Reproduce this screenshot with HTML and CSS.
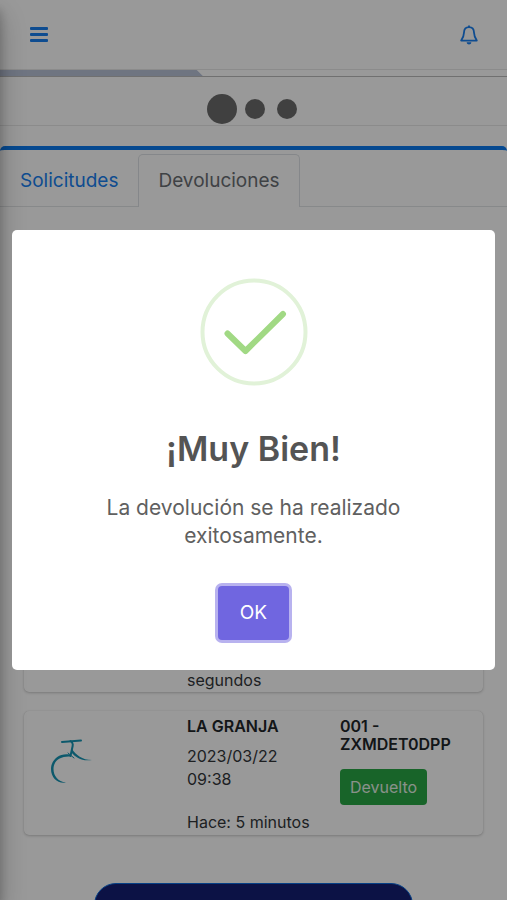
FILE: index.html
```html
<!DOCTYPE html>
<html lang="es">
<head>
<meta charset="utf-8">
<meta name="viewport" content="width=device-width, initial-scale=1">
<title>Devoluciones</title>
<link rel="stylesheet" href="styles.css">
</head>
<body>
<div class="page">
  <header class="navbar">
    <button class="icon-button" type="button" aria-label="Menú">
      <svg width="18" height="16" viewBox="0 0 18 16" fill="currentColor"><rect width="18" height="3" rx="1"/><rect y="6" width="18" height="3" rx="1"/><rect y="12" width="18" height="3" rx="1"/></svg>
    </button>
    <button class="icon-button" type="button" aria-label="Notificaciones">
      <svg width="18" height="20" viewBox="0 0 18 20" fill="none" stroke="currentColor" stroke-width="1.800" stroke-linejoin="round"><path d="M9 .5v2"/><path d="M9 2.200C5.800 2.200 4.100 4.600 4 7.500C3.900 11.400 3 13 1.200 15.600H16.800C15 13 14.100 11.400 14 7.500C13.900 4.600 12.200 2.200 9 2.200Z"/><path d="M6.600 17.300h4.800c-.3 1.600-1.200 2.200-2.400 2.200s-2.100-.6-2.400-2.200z" fill="currentColor" stroke="none"/></svg>
    </button>
  </header>
  <div class="progress"><div class="progress-bar"></div></div>
  <div class="steps"><span class="dot dot-current"></span><span class="dot"></span><span class="dot"></span></div>
  <main class="panel">
    <nav class="tabs">
      <a class="tab" href="#solicitudes">Solicitudes</a>
      <a class="tab tab-active" href="#devoluciones">Devoluciones</a>
    </nav>
    <div class="list">
      <article class="item item-tall">
        <p class="ago">segundos</p>
      </article>
      <article class="item">
        <svg class="bike" width="44" height="48" viewBox="0 0 44 48" fill="none" stroke="currentColor" stroke-linecap="round">
          <path d="M12 4L31 2.500" stroke-width="2"/>
          <path d="M20.500 3C23.500 5 23 7 22 11L20.500 18" stroke-width="2"/>
          <path d="M22 11C26 17 32 22 42 22C32 23.500 26 20 21 14Z" fill="currentColor" stroke="none"/>
          <path d="M18 15L24 20" stroke-width="1"/>
          <path d="M20 16.500C9 14.500 1 22 1 31C1 40 8 46 16 44.500C8 43.500 3.500 38 3.500 31C3.500 23 10 18 20 18.500Z" fill="currentColor" stroke="none"/>
        </svg>
        <div class="info">
          <h2 class="item-title">LA GRANJA</h2>
          <p class="date">2023/03/22 09:38</p>
          <p class="ago">Hace: 5 minutos</p>
        </div>
        <div class="status">
          <h2 class="item-title">001 - ZXMDET0DPP</h2>
          <button class="badge" type="button">Devuelto</button>
        </div>
      </article>
    </div>
    <button class="primary" type="button" aria-label="Nueva devolución"></button>
  </main>
</div>
<aside class="sidebar" aria-hidden="true"></aside>
<div class="overlay">
  <section class="dialog" role="dialog" aria-modal="true" aria-labelledby="dialog-title">
    <svg class="check" width="108" height="108" viewBox="0 0 108 108" fill="none">
      <circle cx="54" cy="54" r="51.500" stroke="#e1f2d8" stroke-width="4"/>
      <path d="M27.500 55.500L45.500 73L83 36" stroke="#a1d984" stroke-width="6" stroke-linecap="round" stroke-linejoin="round"/>
    </svg>
    <h1 class="dialog-title" id="dialog-title">¡Muy Bien!</h1>
    <p class="dialog-text">La devolución se ha realizado exitosamente.</p>
    <button class="confirm" type="button">OK</button>
  </section>
</div>
</body>
</html>
```
FILE: styles.css
```css
* { box-sizing: border-box; }
html, body { height: 100%; }
body {
  margin: 0;
  overflow: hidden;
  background: #fff;
  color: #32363a;
  font: 16px/23px Inter, "Liberation Sans", sans-serif;
}
h1, h2, p { margin: 0; }
button { font: inherit; cursor: pointer; border: 0; }
.page { height: 100%; overflow: hidden; }

.navbar {
  display: flex;
  justify-content: space-between;
  align-items: center;
  height: 70px;
  padding: 1px 29px 0 30px;
  border-bottom: 1px solid #e8e8e8;
}
.icon-button { display: flex; padding: 0; background: none; color: #187ff0; }
.progress { height: 7px; border-bottom: 1px solid #bbb; }
.progress-bar {
  width: 40%;
  height: 6px;
  background: #b9c3d8;
  clip-path: polygon(0 0, 97% 0, 100% 100%, 0 100%);
}
.steps {
  display: flex;
  justify-content: center;
  align-items: center;
  gap: 12px;
  height: 49px;
  padding-top: 16px;
  padding-right: 4px;
  border-bottom: 1px solid #e8e8e8;
}
.dot { width: 20px; height: 20px; border-radius: 50%; background: #6c6c6c; }
.dot-current { width: 30px; height: 30px; margin-right: -4px; }

.panel {
  margin-top: 20px;
  border-top: 4px solid #0a7af0;
  border-radius: 5px;
}
.tabs { display: flex; padding-top: 4px; border-bottom: 1px solid #e2e4e6; }
.tab {
  padding: 12px 19px 11px;
  border: 1px solid transparent;
  border-bottom: 0;
  border-radius: 5px 5px 0 0;
  color: #187ff0;
  font-size: 19px;
  line-height: 28px;
  text-decoration: none;
}
.tab-active {
  margin-bottom: -1px;
  border-color: #dee2e6;
  background: #fff;
  color: #6a6e73;
}
.list { display: grid; gap: 19px; padding: 34px 24px 48px; }
.item {
  display: grid;
  grid-template-columns: 1fr 1fr 1fr;
  min-height: 124px;
  border-radius: 5px;
  box-shadow: 0 0 1px rgba(0, 0, 0, .15), 0 1px 3px rgba(0, 0, 0, .2);
}
.item-tall { min-height: 451px; align-items: end; }
.item-tall .ago { grid-column: 2; padding-left: 10px; }
.bike { margin: 27px 26px 0; color: #1795b4; }
.info { padding: 6px 0 0 10px; }
.status { padding: 6px 10px 0; }
.item-title { color: #212529; font-size: 16px; line-height: 18px; font-weight: 600; }
.date { padding: 10px 30px 20px 0; }
.badge {
  height: 36px;
  margin-top: 16px;
  padding: 0 10px;
  border-radius: 4px;
  background: #28a745;
  color: #e4f2e6;
}
.primary {
  display: block;
  width: 63%;
  height: 60px;
  margin: 0 auto;
  border: 1px solid #0a6be0;
  border-radius: 22px;
  background: #141f73;
}
.sidebar {
  position: fixed;
  top: 0;
  bottom: 0;
  left: -250px;
  width: 250px;
  box-shadow: 0 14px 28px rgba(0, 0, 0, .25), 0 10px 10px rgba(0, 0, 0, .22);
}

.overlay {
  position: fixed;
  inset: 0;
  display: flex;
  align-items: center;
  justify-content: center;
  padding: 12px;
  background: rgba(0, 0, 0, .4);
}
.dialog {
  display: flex;
  flex-direction: column;
  align-items: center;
  width: 100%;
  padding: 48px 20px 30px;
  border-radius: 5px;
  background: #fff;
  text-align: center;
}
.dialog-title {
  margin-top: 40px;
  color: #545454;
  font-size: 34px;
  line-height: 46px;
  font-weight: 600;
}
.dialog-text {
  max-width: 320px;
  margin-top: 22px;
  color: #606060;
  font-size: 21px;
  line-height: 28px;
}
.confirm {
  margin-top: 36px;
  padding: 14px 22px;
  border-radius: 4px;
  background: #7066e0;
  box-shadow: 0 0 0 3px #b8b2ef;
  color: #fff;
  font-size: 19px;
  line-height: 26px;
}
```
